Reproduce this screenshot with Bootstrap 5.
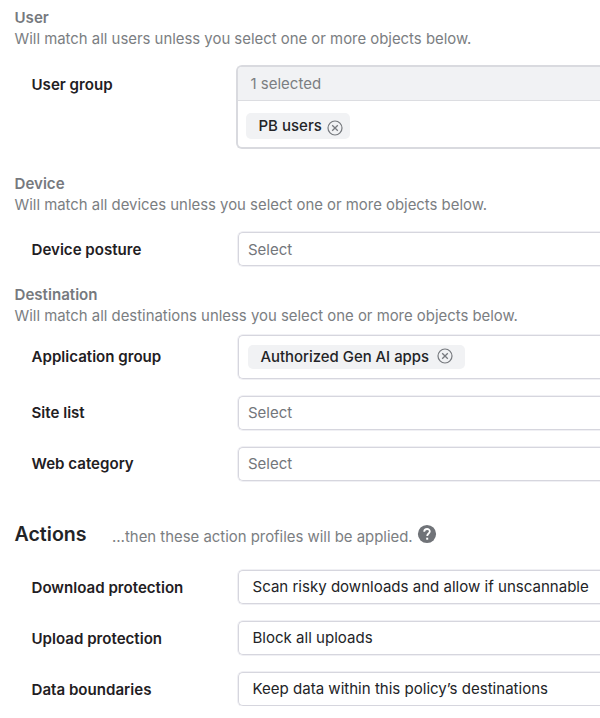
<!DOCTYPE html>
<html lang="en">
<head>
<meta charset="utf-8">
<meta name="viewport" content="width=device-width, initial-scale=1">
<title>Policy</title>
<link rel="stylesheet" href="https://cdn.jsdelivr.net/npm/bootstrap@5.3.0/dist/css/bootstrap.min.css">
<style>
body{font-family:Inter,"Liberation Sans",sans-serif;font-size:15px;line-height:21px;color:#232427;background:#fff;overflow:hidden}
.policy-form{padding:7px 0 0 14.5px}
.section-title{font-size:15.1px;line-height:22px;font-weight:600;color:#76797e}
.hint{font-size:14.9px;line-height:21px;color:#7b7e82;white-space:nowrap}
.field-row{padding-left:17px}
.field-label{width:206px;font-size:15.1px;font-weight:600;color:#1f2023;flex:none}
.group-label{padding-top:9px}
.field-box{height:34px;border:1px solid #d6d6de;border-right:0;border-radius:5px 0 0 5px;box-shadow:0 0 0 1px #f0f0f4;padding:0 9.5px;white-space:nowrap}
.field-box.value{font-size:15.05px;padding:0 14px 2px}
.field-box.tall{height:44px;padding:0 9px}
.placeholder-text{color:#73767b}
.picker{height:84px;margin-left:-2px;border:2px solid #d9dadf;border-right:0;border-radius:6px 0 0 6px}
.picker-head{height:34px;padding:0 13px;background:#f1f2f4;border-bottom:1px solid #dcdde1;border-radius:4px 0 0 0;color:#7b7e82}
.picker-body{padding:12px 8px 0 8px}
.chip{height:26px;background:#f1f2f4;border-radius:5px;white-space:nowrap;padding:0 7px 1px 13px}
.chip svg{margin-left:5px}
.chip.wide{height:24px;font-size:14.9px;padding:1px 12px 0 13px}
.chip.wide svg{margin:0 0 2px 8px}
.actions-title{font-size:19.6px;line-height:28px;font-weight:600}
.actions-hint{margin-left:25.5px}
.help-icon{margin-left:4.5px}
.mt-user{margin-top:15px}
.mt-device{margin-top:24px}
.mt-posture{margin-top:16px}
.mt-dest{margin-top:17.5px}
.mt-app{margin-top:8px}
.mt-field{margin-top:17px}
.mt-actions{margin-top:38.5px}
.mt-download{margin-top:22px}
</style>
<script src="https://cdn.jsdelivr.net/npm/bootstrap@5.3.0/dist/js/bootstrap.bundle.min.js"></script>
</head>
<body>
<svg class="d-none" xmlns="http://www.w3.org/2000/svg">
<symbol id="remove" viewBox="0 0 16 16"><circle cx="8" cy="8" r="7" fill="none" stroke="#76797e" stroke-width="1.2"/><path d="M5.2 5.2 10.8 10.8M10.8 5.2 5.2 10.8" stroke="#76797e" stroke-width="1.3" fill="none"/></symbol>
</svg>
<main class="policy-form d-flex flex-column">
<h2 class="section-title mb-0">User</h2>
<div class="hint">Will match all users unless you select one or more objects below.</div>
<div class="field-row mt-user d-flex">
<div class="field-label group-label">User group</div>
<div class="picker flex-grow-1">
<div class="picker-head d-flex align-items-center">1 selected</div>
<div class="picker-body d-flex"><span class="chip d-inline-flex align-items-center fw-medium">PB users<svg width="16" height="16" class="mt-1"><use href="#remove"/></svg></span></div>
</div>
</div>
<h2 class="section-title mt-device mb-0">Device</h2>
<div class="hint">Will match all devices unless you select one or more objects below.</div>
<div class="field-row mt-posture d-flex align-items-center">
<div class="field-label">Device posture</div>
<div class="field-box flex-grow-1 d-flex align-items-center placeholder-text">Select</div>
</div>
<h2 class="section-title mt-dest mb-0">Destination</h2>
<div class="hint">Will match all destinations unless you select one or more objects below.</div>
<div class="field-row mt-app d-flex align-items-center">
<div class="field-label">Application group</div>
<div class="field-box tall flex-grow-1 d-flex align-items-center"><span class="chip wide d-inline-flex align-items-center fw-medium">Authorized Gen AI apps<svg width="16" height="16"><use href="#remove"/></svg></span></div>
</div>
<div class="field-row mt-field d-flex align-items-center">
<div class="field-label">Site list</div>
<div class="field-box flex-grow-1 d-flex align-items-center placeholder-text">Select</div>
</div>
<div class="field-row mt-field d-flex align-items-center">
<div class="field-label">Web category</div>
<div class="field-box flex-grow-1 d-flex align-items-center placeholder-text">Select</div>
</div>
<div class="mt-actions d-flex align-items-center">
<h1 class="actions-title mb-0">Actions</h1>
<div class="hint actions-hint pt-2">…then these action profiles will be applied.</div>
<svg class="help-icon" width="20" height="20" viewBox="0 0 20 20"><circle cx="10" cy="10" r="9.1" fill="#707378"/><path d="M7.2 7.7C7.3 4 12.9 4.2 12.8 7.5 12.8 9.5 10.2 9.6 10.2 12" fill="none" stroke="#fff" stroke-width="1.8"/><path d="M9.2 13.7h2v2h-2z" fill="#fff"/></svg>
</div>
<div class="field-row mt-download d-flex align-items-center">
<div class="field-label">Download protection</div>
<div class="field-box value flex-grow-1 d-flex align-items-center">Scan risky downloads and allow if unscannable</div>
</div>
<div class="field-row mt-field d-flex align-items-center">
<div class="field-label">Upload protection</div>
<div class="field-box value flex-grow-1 d-flex align-items-center">Block all uploads</div>
</div>
<div class="field-row mt-field d-flex align-items-center">
<div class="field-label">Data boundaries</div>
<div class="field-box value flex-grow-1 d-flex align-items-center">Keep data within this policy’s destinations</div>
</div>
</main>
</body>
</html>
